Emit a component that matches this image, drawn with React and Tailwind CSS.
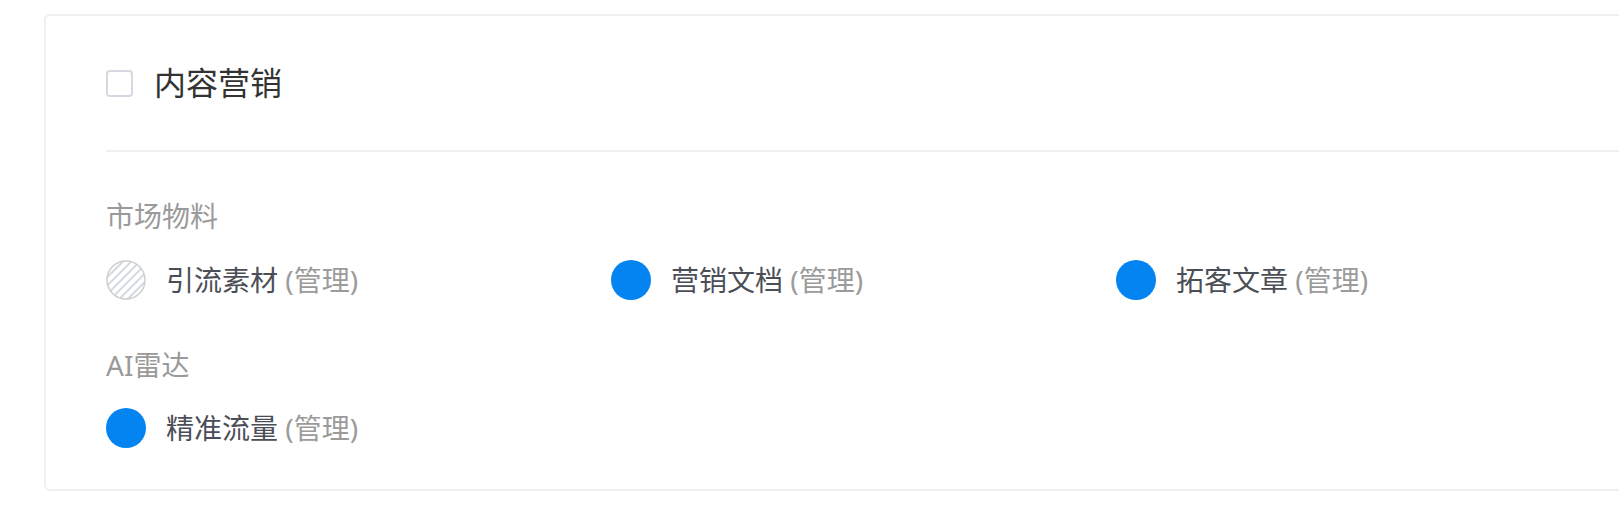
import React from "react";

const FONT = { fontFamily: '"Noto Sans", "Noto Sans CJK SC", sans-serif' };

function Hatched() {
  return (
    <svg width="40" height="40" viewBox="0 0 40 40" className="shrink-0">
      <defs>
        <pattern id="hatch" width="6" height="6" patternUnits="userSpaceOnUse" patternTransform="rotate(45)">
          <rect width="6" height="6" fill="#ffffff" />
          <rect x="0" y="0" width="2" height="6" fill="#d3d8e3" />
        </pattern>
      </defs>
      <circle cx="20" cy="20" r="19" fill="url(#hatch)" />
      <circle cx="20" cy="20" r="19" fill="none" stroke="#cfcfcf" strokeWidth="1.5" />
    </svg>
  );
}

function Item({ name, hatched }) {
  return (
    <div className="flex items-center h-[40px] w-[505px] shrink-0">
      {hatched ? <Hatched /> : <div className="w-[40px] h-[40px] rounded-full bg-[#0384f0] shrink-0" />}
      <span className="ml-[20px] text-[28px] leading-[40px] text-[#4b4e56] whitespace-nowrap">
        {name} <span className="text-[#9b9b9b]">(管理)</span>
      </span>
    </div>
  );
}

export default function App() {
  return (
    <div className="w-[1619px] h-[507px] bg-white overflow-hidden" style={FONT}>
      <div className="pt-[14px] pl-[44px]">
        <div className="w-[1700px] border-2 border-[#f0f0f0] rounded-[6px] bg-white pl-[60px] pb-[41px]">
          <div className="h-[134px] flex items-center">
            <div className="w-[27px] h-[27px] border-2 border-[#d6d9e1] rounded-[4px] shrink-0" />
            <span className="ml-[21px] text-[32px] leading-[40px] text-[#333333]">内容营销</span>
          </div>
          <div className="h-[2px] bg-[#f0f0f0]" />
          <div className="pt-[46px] text-[28px] leading-[36px] text-[#9a9a9a]">市场物料</div>
          <div className="mt-[26px] flex">
            <Item name="引流素材" hatched />
            <Item name="营销文档" />
            <Item name="拓客文章" />
          </div>
          <div className="mt-[47px] text-[28px] leading-[36px] text-[#9a9a9a]">AI雷达</div>
          <div className="mt-[25px] flex">
            <Item name="精准流量" />
          </div>
        </div>
      </div>
    </div>
  );
}
